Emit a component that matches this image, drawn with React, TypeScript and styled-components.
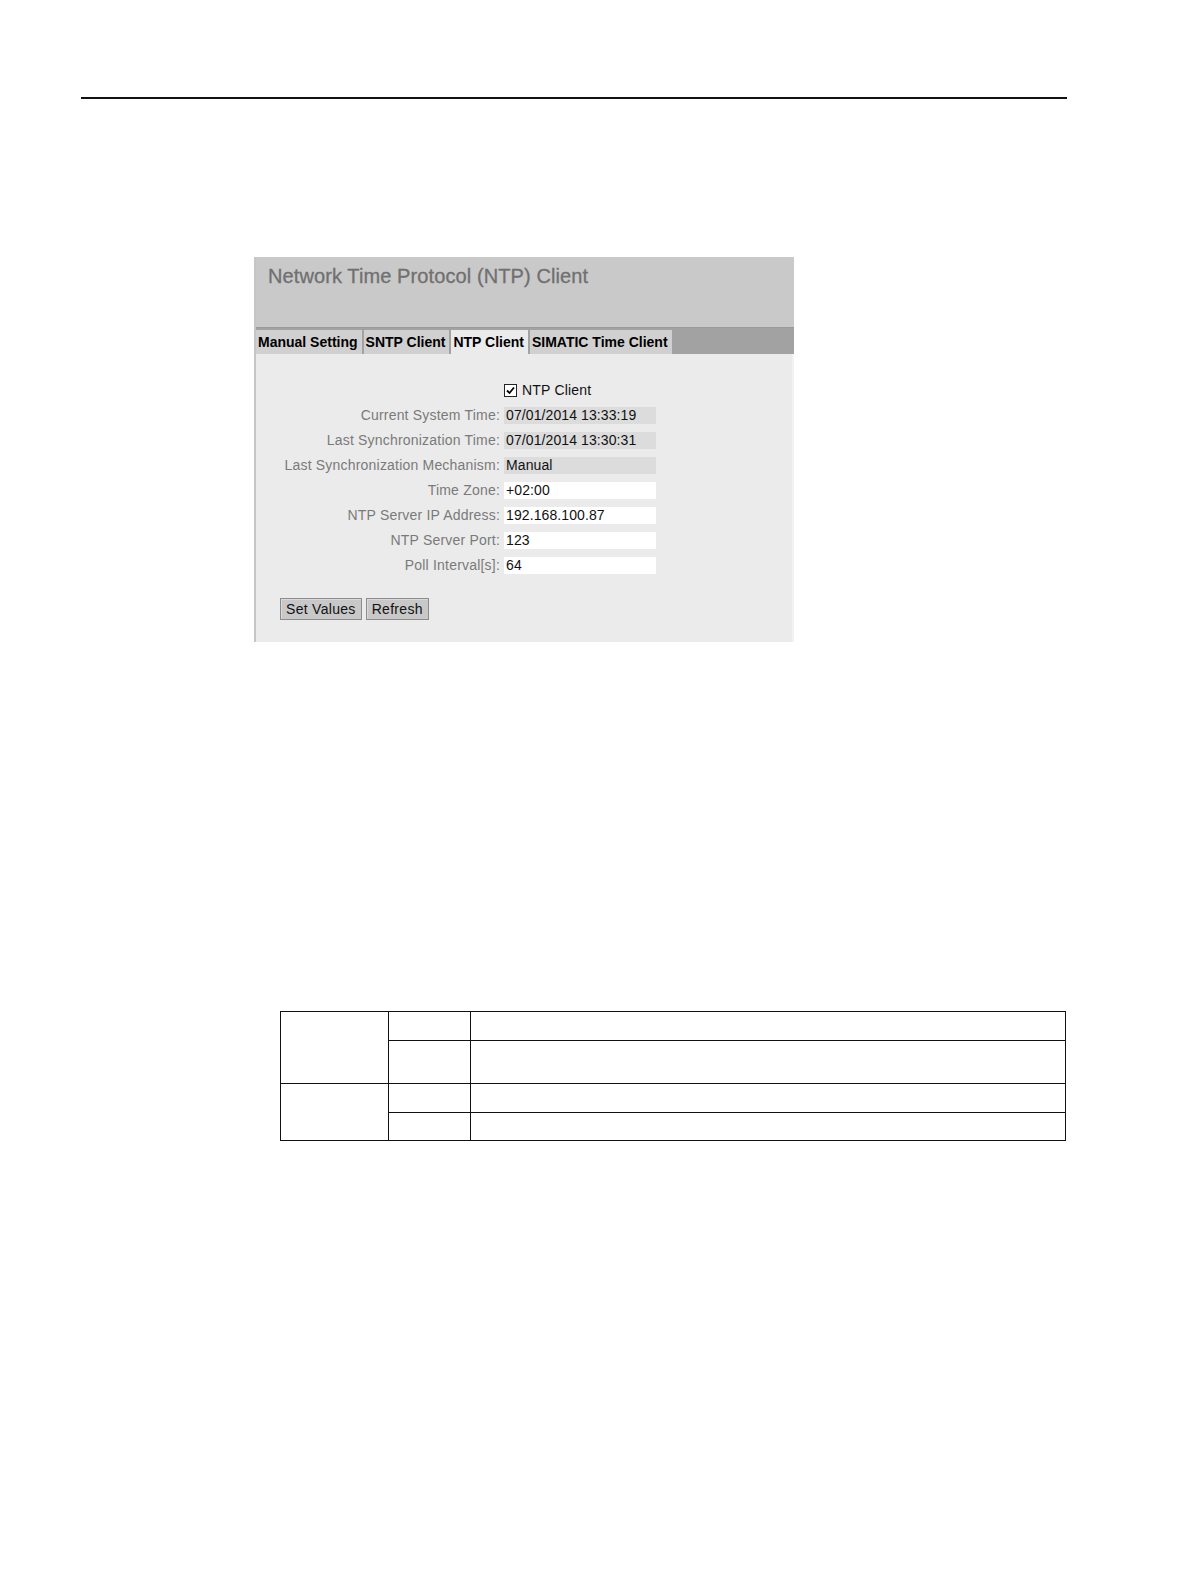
import React from "react";
import styled, { createGlobalStyle } from "styled-components";

const Global = createGlobalStyle`
  html, body { margin: 0; padding: 0; background: #ffffff; overflow: hidden; }
  body { font-family: "Liberation Sans", Arial, sans-serif; }
`;

const Page = styled.div`
  padding-top: 97px;
  padding-bottom: 20px;
`;

const TopRule = styled.div`
  margin-left: 81px;
  width: 986px;
  height: 2px;
  background: #111;
`;

const Panel = styled.div`
  margin-top: 158px;
  margin-left: 254px;
  width: 538px;
  border-left: 2px solid #c6c6c6;
  display: flex;
  flex-direction: column;
`;

const Header = styled.div`
  background: #c9c9c9;
  height: 70px;
  padding: 8px 0 0 12px;
  box-sizing: border-box;
`;

const Title = styled.h1`
  margin: 0;
  font-family: "Liberation Sans", Arial, sans-serif;
  font-weight: normal;
  font-size: 20px;
  color: #707070;
  letter-spacing: 0.1px;
  -webkit-text-stroke: 0.3px #707070;
`;

const TabBar = styled.div`
  display: flex;
  gap: 2px;
  background: #a2a2a2;
  height: 27px;
  border-top: 1px solid #9a9a9a;
  box-sizing: border-box;
  padding-top: 2px;
`;

const Tab = styled.div<{ $active?: boolean }>`
  display: flex;
  align-items: center;
  padding: 0 4px 0 2px;
  background: ${(p) => (p.$active ? "#ebebeb" : "#d0d0d0")};
  font-family: "Liberation Sans", Arial, sans-serif;
  font-weight: bold;
  font-size: 14px;
  letter-spacing: 0px;
  color: #000;
`;

const Body = styled.div`
  background: #ebebeb;
  padding: 28px 0 22px 24px;
  display: flex;
  flex-direction: column;
  border-right: 2px solid #f2f2f2;
`;

const Grid = styled.div`
  display: grid;
  grid-template-columns: 220px 152px;
  column-gap: 4px;
  row-gap: 8px;
  align-items: center;
`;

const Label = styled.div`
  text-align: right;
  font-size: 14px;
  letter-spacing: 0.2px;
  color: #7a7a7a;
  white-space: nowrap;
  line-height: 17px;
`;

const Value = styled.div<{ $editable?: boolean }>`
  height: 17px;
  line-height: 17px;
  padding-left: 2px;
  background: ${(p) => (p.$editable ? "#ffffff" : "#dcdcdc")};
  font-size: 14px;
  letter-spacing: 0.1px;
  color: #111;
  white-space: nowrap;
`;

const CheckRow = styled.label`
  display: flex;
  align-items: center;
  gap: 5px;
  font-size: 14px;
  letter-spacing: 0.2px;
  color: #111;
  line-height: 17px;
`;

const Box = styled.span`
  width: 11px;
  height: 11px;
  border: 1px solid #222;
  background: #fff;
  display: inline-flex;
  align-items: center;
  justify-content: center;
`;

const Buttons = styled.div`
  display: flex;
  gap: 4px;
  margin-top: 24px;
`;

const Button = styled.button`
  font-family: "Liberation Sans", Arial, sans-serif;
  font-size: 14px;
  color: #111;
  background: #c8c8c8;
  border: 1px solid #8c8c8c;
  box-shadow: inset 1px 1px 0 #dadada;
  height: 22px;
  padding: 0 5px;
  letter-spacing: 0.3px;
`;

const Table = styled.table`
  margin-top: 369px;
  margin-left: 280px;
  width: 786px;
  border-collapse: collapse;
  td {
    border: 1.5px solid #111;
    padding: 0;
  }
`;

const Row = styled.tr<{ $h: number }>`
  height: ${(p) => p.$h}px;
`;

const rows: { label: string; value: string; editable?: boolean }[] = [
  { label: "Current System Time:", value: "07/01/2014 13:33:19" },
  { label: "Last Synchronization Time:", value: "07/01/2014 13:30:31" },
  { label: "Last Synchronization Mechanism:", value: "Manual" },
  { label: "Time Zone:", value: "+02:00", editable: true },
  { label: "NTP Server IP Address:", value: "192.168.100.87", editable: true },
  { label: "NTP Server Port:", value: "123", editable: true },
  { label: "Poll Interval[s]:", value: "64", editable: true },
];

export default function App() {
  return (
    <Page>
      <Global />
      <TopRule />
      <Panel>
        <Header>
          <Title>Network Time Protocol (NTP) Client</Title>
        </Header>
        <TabBar>
          <Tab>Manual Setting</Tab>
          <Tab>SNTP Client</Tab>
          <Tab $active>NTP Client</Tab>
          <Tab>SIMATIC Time Client</Tab>
        </TabBar>
        <Body>
          <Grid>
            <span />
            <CheckRow>
              <Box>
                <svg width="9" height="9" viewBox="0 0 9 9">
                  <path d="M1 4.5 L3.5 7 L8 1.5" stroke="#000" strokeWidth="1.8" fill="none" />
                </svg>
              </Box>
              NTP Client
            </CheckRow>
            {rows.map((r) => (
              <React.Fragment key={r.label}>
                <Label>{r.label}</Label>
                <Value $editable={r.editable}>{r.value}</Value>
              </React.Fragment>
            ))}
          </Grid>
          <Buttons>
            <Button>Set Values</Button>
            <Button>Refresh</Button>
          </Buttons>
        </Body>
      </Panel>
      <Table>
        <colgroup>
          <col style={{ width: 108 }} />
          <col style={{ width: 82 }} />
          <col />
        </colgroup>
        <tbody>
          <Row $h={29}>
            <td rowSpan={2} />
            <td />
            <td />
          </Row>
          <Row $h={43}>
            <td />
            <td />
          </Row>
          <Row $h={29}>
            <td rowSpan={2} />
            <td />
            <td />
          </Row>
          <Row $h={28}>
            <td />
            <td />
          </Row>
        </tbody>
      </Table>
    </Page>
  );
}
